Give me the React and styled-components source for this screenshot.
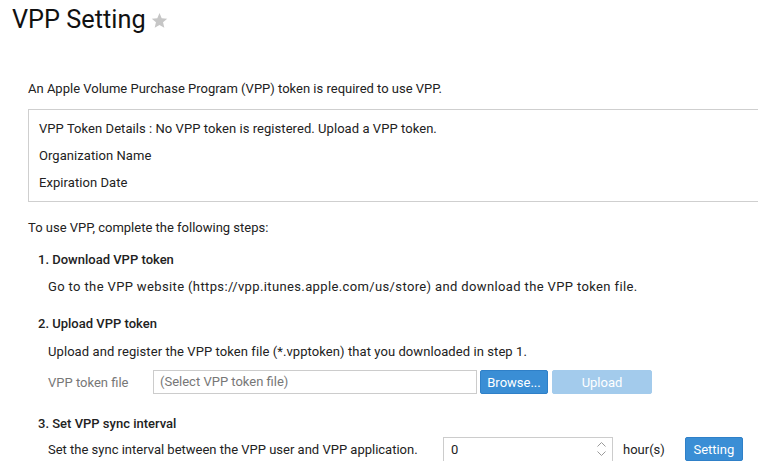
import React from 'react'
import styled, { createGlobalStyle } from 'styled-components'

const GlobalStyle = createGlobalStyle`
  html, body {
    margin: 0;
    padding: 0;
    background: #fff;
    overflow: hidden;
  }
  body {
    font-family: Roboto, "Liberation Sans", Arial, sans-serif;
    font-size: 13px;
    color: #222;
  }
`

const Page = styled.div`
  width: 780px;
  padding-top: 6px;
`

const Header = styled.div`
  display: flex;
  align-items: center;
  padding-left: 12px;
  height: 28px;
`

const Title = styled.h1`
  margin: 0;
  font-size: 25.3px;
  font-weight: 400;
  line-height: 28px;
  color: #111;
`

const Star = styled.svg`
  margin-left: 5px;
  margin-top: 0;
`

const Content = styled.div`
  padding-left: 28px;
`

const Text = styled.div`
  line-height: 18px;
  margin-top: ${p => p.top || 0}px;
  padding-left: ${p => p.indent || 0}px;
  letter-spacing: ${p => p.spread || 0}px;
`

const InfoBox = styled.div`
  margin-top: 11px;
  border: 1px solid #cfcfcf;
  padding: 5px 10px;
`

const InfoLine = styled.div`
  line-height: 27px;
  letter-spacing: 0.06px;
`

const StepTitle = styled.div`
  font-weight: 500;
  line-height: 18px;
  padding-left: 10px;
  margin-top: ${p => p.top}px;
`

const Row = styled.div`
  display: flex;
  align-items: center;
  height: 24px;
  padding-left: 20px;
  margin-top: ${p => p.top}px;
`

const Label = styled.span`
  width: ${p => p.width}px;
  flex-shrink: 0;
  color: ${p => (p.muted ? '#777' : '#222')};
`

const FileField = styled.div`
  box-sizing: border-box;
  width: 324px;
  height: 24px;
  border: 1px solid #ccc;
  padding: 0 6px;
  line-height: 22px;
  color: #777;
`

const Button = styled.button`
  box-sizing: border-box;
  height: 24px;
  width: ${p => p.width}px;
  margin-left: ${p => p.gap || 0}px;
  border: 1px solid ${p => (p.disabled ? '#a3cbec' : '#2f80c8')};
  border-radius: 2px;
  background: ${p => (p.disabled ? '#a3cbec' : '#3a8ed5')};
  color: #fff;
  font-family: Roboto, "Liberation Sans", Arial, sans-serif;
  font-size: 13px;
  padding: 0;
  cursor: ${p => (p.disabled ? 'default' : 'pointer')};
`

const NumberField = styled.div`
  box-sizing: border-box;
  width: 170px;
  height: 25px;
  border: 1px solid #ccc;
  display: flex;
  align-items: center;
  justify-content: space-between;
  padding: 0 5px 0 7px;
`

const Spinner = styled.svg`
  display: block;
`

const Unit = styled.span`
  margin-left: 10px;
`

const App = () => (
  <Page>
    <GlobalStyle />
    <Header>
      <Title>VPP Setting</Title>
      <Star width="17" height="17" viewBox="0 0 24 24">
        <path
          fill="#c6c6c6"
          d="M12 1.5l3.1 7.2 7.8.7-5.9 5.2 1.8 7.7L12 18.3l-6.8 4 1.8-7.7-5.9-5.2 7.8-.7z"
        />
      </Star>
    </Header>
    <Content>
      <Text top={46}>An Apple Volume Purchase Program (VPP) token is required to use VPP.</Text>
      <InfoBox>
        <InfoLine>VPP Token Details : No VPP token is registered. Upload a VPP token.</InfoLine>
        <InfoLine>Organization Name</InfoLine>
        <InfoLine>Expiration Date</InfoLine>
      </InfoBox>
      <Text top={17}>To use VPP, complete the following steps:</Text>

      <StepTitle top={14}>1. Download VPP token</StepTitle>
      <Text top={9} indent={20} spread={0.37}>
        Go to the VPP website (https://vpp.itunes.apple.com/us/store) and download the VPP token file.
      </Text>

      <StepTitle top={19}>2. Upload VPP token</StepTitle>
      <Text top={10} indent={20} spread={0.08}>
        Upload and register the VPP token file (*.vpptoken) that you downloaded in step 1.
      </Text>
      <Row top={9}>
        <Label width={105} muted>VPP token file</Label>
        <FileField>(Select VPP token file)</FileField>
        <Button width={68} gap={3}>Browse...</Button>
        <Button width={100} gap={4} disabled>Upload</Button>
      </Row>

      <StepTitle top={21}>3. Set VPP sync interval</StepTitle>
      <Row top={4}>
        <Label width={395}>Set the sync interval between the VPP user and VPP application.</Label>
        <NumberField>
          <span>0</span>
          <Spinner width="11" height="18" viewBox="0 0 11 18">
            <path d="M1.5 6.5L5.5 2.5L9.5 6.5" fill="none" stroke="#9a9a9a" strokeWidth="1" />
            <path d="M1.5 11.5L5.5 15.5L9.5 11.5" fill="none" stroke="#9a9a9a" strokeWidth="1" />
          </Spinner>
        </NumberField>
        <Unit>hour(s)</Unit>
        <Button width={58} gap={20}>Setting</Button>
      </Row>
    </Content>
  </Page>
)

export default App
